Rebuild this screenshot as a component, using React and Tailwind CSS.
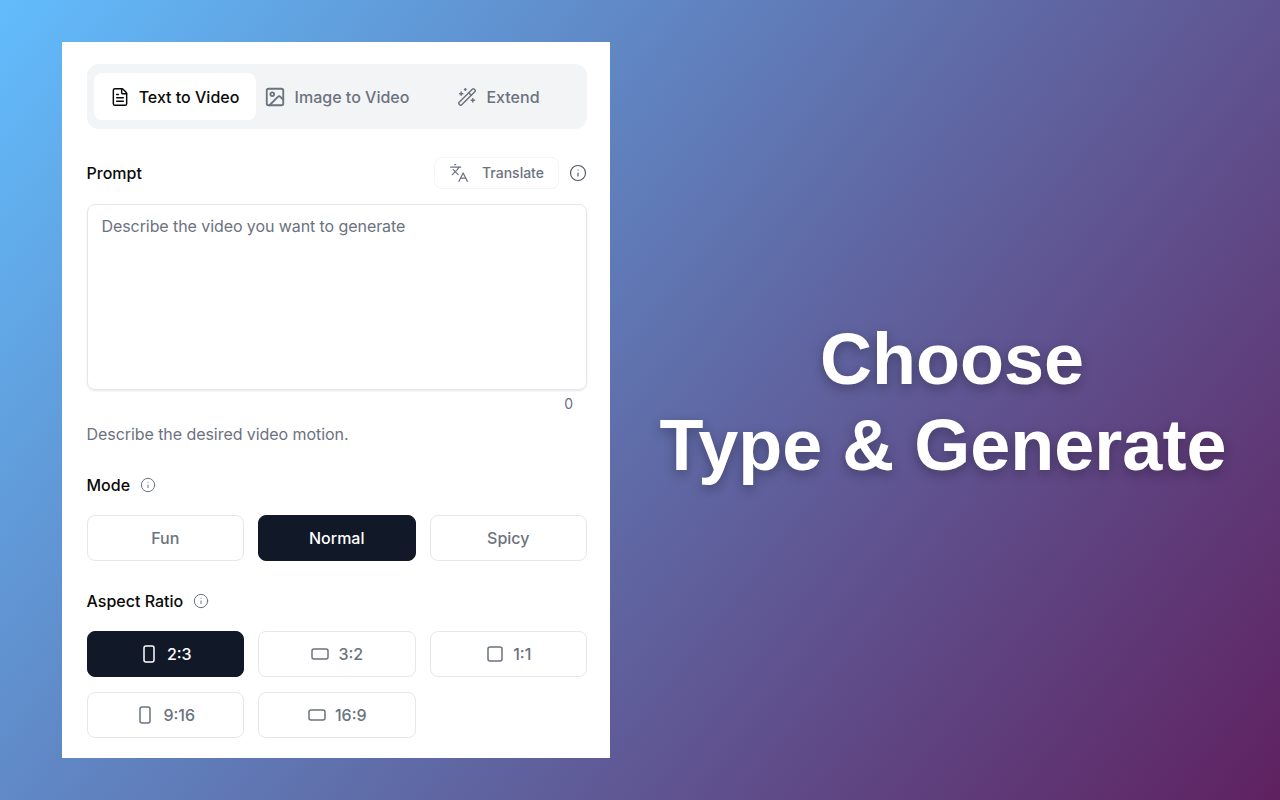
import React from 'react';
import { FileText, Image, WandSparkles, Languages, Info } from 'lucide-react';

const TABS = [
  { label: 'Text to Video', Icon: FileText, active: true },
  { label: 'Image to Video', Icon: Image },
  { label: 'Extend', Icon: WandSparkles },
];

const MODES = ['Fun', 'Normal', 'Spicy'];

const RATIOS = [
  { label: '2:3', w: 10, h: 16, active: true },
  { label: '3:2', w: 16, h: 10 },
  { label: '1:1', w: 14, h: 14 },
  { label: '9:16', w: 10, h: 16 },
  { label: '16:9', w: 16, h: 10 },
];

const RatioIcon = ({ w, h }) => (
  <svg width="20" height="20" viewBox="0 0 20 20" fill="none" stroke="currentColor" strokeWidth="1.5">
    <rect x={10 - w / 2} y={10 - h / 2} width={w} height={h} rx="2" />
  </svg>
);

const optionClass = (active) =>
  active
    ? 'h-[46px] flex items-center justify-center rounded-lg bg-[#111827] border border-[#111827] text-white'
    : 'h-[46px] flex items-center justify-center rounded-lg bg-white border border-[#e5e7eb] text-[#6b7280]';

const Label = ({ children }) => (
  <div className="flex items-center gap-[10px] h-6">
    <span className="text-base font-medium text-[#0a0a0a]">{children}</span>
    <Info size={16} strokeWidth={1.5} className="text-[#6b7280]" />
  </div>
);

export default function App() {
  return (
    <div
      className="w-[1280px] h-[800px] flex items-center pl-[62px] bg-[linear-gradient(128deg,#62bcfc_0%,#5f6ca8_52%,#5f2160_100%)] overflow-hidden"
      style={{ fontFamily: 'Inter, sans-serif' }}
    >
      <div className="w-[548px] h-[716px] bg-white pl-[24.5px] pr-[23px] pt-[22px] shrink-0">
        {/* Tabs */}
        <div className="h-[65px] bg-[#f3f4f6] rounded-xl px-[7px] flex items-center">
          {TABS.map(({ label, Icon, active }, i) => (
            <button
              key={label}
              className={
                active
                  ? 'w-[162px] h-[47px] flex items-center justify-center gap-[9px] rounded-lg bg-white text-base font-medium text-[#0a0a0a]'
                  : 'w-[162px] h-[47px] flex items-center justify-center gap-[9px] text-base font-medium text-[#6b7280]'
              }
            >
              <Icon size={i === 1 ? 22 : 20} strokeWidth={i === 1 ? 2 : 1.75} />
              {label}
            </button>
          ))}
        </div>

        {/* Prompt */}
        <div className="mt-7 flex items-center justify-between h-8">
          <span className="text-base font-medium text-[#0a0a0a]">Prompt</span>
          <div className="flex items-center gap-[10px]">
            <button className="w-[125px] h-8 flex items-center justify-center gap-[13px] rounded-lg border border-[#f3f4f6] text-sm font-medium text-[#6b7280]">
              <Languages size={20} strokeWidth={1.5} />
              Translate
            </button>
            <Info size={18} strokeWidth={1.5} className="text-[#4b5563]" />
          </div>
        </div>
        <div className="mt-[15px] h-[186px] rounded-lg border border-[#e5e7eb] shadow-[0_1px_2px_rgba(0,0,0,0.1)] px-[14px] py-[9px] text-base tracking-[-0.08px] text-[#6b7280]">
          Describe the video you want to generate
        </div>
        <div className="mt-[4px] pr-[14px] text-right text-sm leading-5 text-[#6b7280]">0</div>
        <p className="mt-[8px] text-base leading-6 tracking-[-0.06px] text-[#6b7280]">Describe the desired video motion.</p>

        {/* Mode */}
        <div className="mt-[27px]">
          <Label>Mode</Label>
        </div>
        <div className="mt-[18px] grid grid-cols-3 gap-[14px]">
          {MODES.map((m) => (
            <button key={m} className={`${optionClass(m === 'Normal')} text-base font-medium`}>
              {m}
            </button>
          ))}
        </div>

        {/* Aspect ratio */}
        <div className="mt-[28px]">
          <Label>Aspect Ratio</Label>
        </div>
        <div className="mt-[18px] grid grid-cols-3 gap-x-[14px] gap-y-[15px]">
          {RATIOS.map((r) => (
            <button key={r.label} className={`${optionClass(r.active)} gap-2 text-base font-medium`}>
              <RatioIcon w={r.w} h={r.h} />
              {r.label}
            </button>
          ))}
        </div>
      </div>

      <div className="flex-1 pr-1 pt-1 text-center text-white text-[72px] leading-[86px] font-bold [text-shadow:0_4px_12px_rgba(0,0,0,0.3)]" style={{ fontFamily: '"Liberation Sans", sans-serif' }}>
        <div className="pl-[18px]">Choose</div>
        <div>Type &amp; Generate</div>
      </div>
    </div>
  );
}
